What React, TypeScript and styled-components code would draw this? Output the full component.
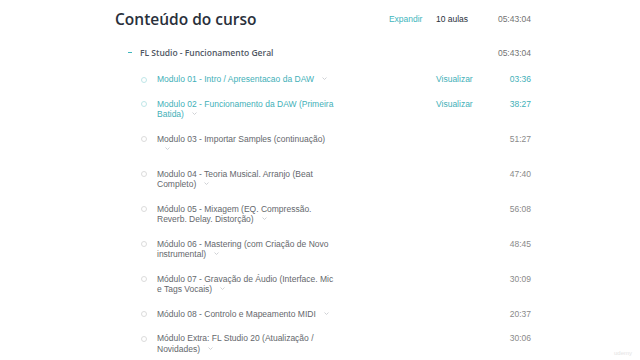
import React from 'react';
import styled, { createGlobalStyle } from 'styled-components';

interface ILecture {
  title: string;
  time: string;
  preview?: boolean;
}

const lectures: ILecture[] = [
  { title: 'Modulo 01 - Intro / Apresentacao da DAW', time: '03:36', preview: true },
  { title: 'Modulo 02 - Funcionamento da DAW (Primeira Batida)', time: '38:27', preview: true },
  { title: 'Modulo 03 - Importar Samples (continuação)', time: '51:27' },
  { title: 'Modulo 04 - Teoria Musical. Arranjo (Beat Completo)', time: '47:40' },
  { title: 'Módulo 05 - Mixagem (EQ. Compressão. Reverb. Delay. Distorção)', time: '56:08' },
  { title: 'Módulo 06 - Mastering (com Criação de Novo instrumental)', time: '48:45' },
  { title: 'Módulo 07 - Gravação de Áudio (Interface. Mic e Tags Vocais)', time: '30:09' },
  { title: 'Módulo 08 - Controlo e Mapeamento MIDI', time: '20:37' },
  { title: 'Módulo Extra: FL Studio 20 (Atualização / Novidades)', time: '30:06' },
];

const GlobalStyle = createGlobalStyle`
  html, body {
    margin: 0;
    padding: 0;
    background: #fff;
  }
  body {
    font-family: 'Liberation Sans', Arial, sans-serif;
    overflow: hidden;
  }
`;

function Chevron() {
  return (
    <svg width="5" height="3" viewBox="0 0 5 3" style={{ display: 'block' }}>
      <path d="M0.5 0.5 L2.5 2.5 L4.5 0.5" fill="none" stroke="#c4c7cc" strokeWidth="0.8" />
    </svg>
  );
}

export default function App() {
  return (
    <Page>
      <GlobalStyle />
      <Curriculum>
        <Header>
          <Title>Conteúdo do curso</Title>
          <Expand>Expandir</Expand>
          <Count>10 aulas</Count>
          <Duration>05:43:04</Duration>
        </Header>

        <Section>
          <Dash />
          <SectionTitle>FL Studio - Funcionamento Geral</SectionTitle>
          <Duration>05:43:04</Duration>
        </Section>

        {lectures.map((lecture) => (
          <Lecture key={lecture.title}>
            <Ring $active={!!lecture.preview} />
            <LectureTitle $active={!!lecture.preview}>
              {lecture.title}
              <Arrow>
                <Chevron />
              </Arrow>
            </LectureTitle>
            <span />
            <Meta>
              {lecture.preview && <Preview>Visualizar</Preview>}
              <Time $active={!!lecture.preview}>{lecture.time}</Time>
            </Meta>
          </Lecture>
        ))}
      </Curriculum>
      <Watermark>udemy</Watermark>
    </Page>
  );
}

const Page = styled.div`
  position: relative;
  width: 640px;
  height: 360px;
  background: #fff;
`;

const Curriculum = styled.div`
  width: 416px;
  margin-left: 115px;
`;

const Header = styled.div`
  display: grid;
  grid-template-columns: 1fr 47px 62px auto;
  align-items: center;
  height: 38px;
  font-size: 8.5px;
`;

const Title = styled.h2`
  margin: 0;
  font-family: 'Open Sans', 'Liberation Sans', sans-serif;
  font-size: 15.5px;
  font-weight: 600;
  color: #29303b;
  line-height: 20px;
`;

const Expand = styled.span`
  color: #3fb6bd;
`;

const Count = styled.span`
  color: #29303b;
`;

const Duration = styled.span`
  color: #737373;
  font-size: 8.5px;
  text-align: right;
`;

const Section = styled.div`
  display: flex;
  align-items: center;
  height: 29px;
  padding-left: 13px;
`;

const Dash = styled.span`
  width: 4px;
  height: 1.5px;
  background: #3fb6bd;
  margin-right: 8px;
`;

const SectionTitle = styled.span`
  flex: 1;
  font-family: 'Open Sans', 'Liberation Sans', sans-serif;
  font-size: 8.5px;
  font-weight: 600;
  color: #505763;
`;

const Lecture = styled.div`
  display: grid;
  grid-template-columns: 16px 178px 1fr 95px;
  padding: 7px 0 7px 26px;
  font-size: 8.5px;
  line-height: 10.5px;
`;

const Ring = styled.span<{ $active: boolean }>`
  width: 4px;
  height: 4px;
  margin-top: 2.5px;
  border-radius: 50%;
  border: 1.2px solid ${(p) => (p.$active ? '#bfe6e8' : '#dcdcdc')};
`;

const LectureTitle = styled.div<{ $active: boolean }>`
  color: ${(p) => (p.$active ? '#3fb0b8' : '#64676c')};
`;

const Arrow = styled.span`
  display: inline-block;
  height: 3px;
  line-height: 0;
  margin-left: 8px;
  vertical-align: 2px;
`;

const Meta = styled.div`
  display: flex;
  align-items: flex-start;
`;

const Preview = styled.span`
  color: #3fb0b8;
`;

const Time = styled.span<{ $active: boolean }>`
  margin-left: auto;
  color: ${(p) => (p.$active ? '#3fb0b8' : '#8a8a8a')};
`;

const Watermark = styled.span`
  position: absolute;
  right: 8px;
  bottom: 4px;
  font-size: 6px;
  color: #e4e4e4;
`;
